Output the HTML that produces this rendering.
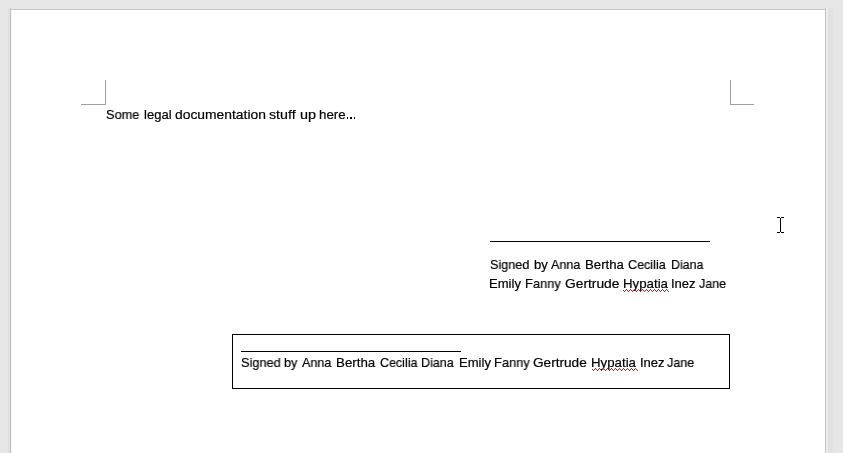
<!DOCTYPE html>
<html><head><meta charset="utf-8">
<style>
html,body{margin:0;padding:0;}
body{width:843px;height:453px;overflow:hidden;background:#e6e6e6;position:relative;font-family:"Liberation Sans",sans-serif;}
.abs{position:absolute;}
#page{position:absolute;left:10px;top:9px;width:815px;height:460px;background:#fff;}
.pb{position:absolute;}
.crop{position:absolute;background:#a0a0a0;}
.t{position:absolute;font-size:13px;line-height:15px;white-space:pre;color:#000;transform-origin:0 0;will-change:transform;-webkit-text-stroke:0.2px #000;}
.line{position:absolute;height:1px;background:#000;}
.box{position:absolute;border:1px solid #000;}
</style></head>
<body>
<div id="page"></div>
<div class="pb" style="left:8px;top:9px;width:2px;height:450px;background:#e0e0e0"></div>
<div class="pb" style="left:10px;top:8px;width:1px;height:450px;background:#c0c0c0"></div>
<div class="pb" style="left:11px;top:10px;width:1px;height:450px;background:#f6f6f6"></div>
<div class="pb" style="left:10px;top:9px;width:815px;height:1px;background:#c6c6c6"></div>
<div class="pb" style="left:12px;top:12px;width:813px;height:1px;background:#f8f8f8"></div>
<div class="pb" style="left:12px;top:14px;width:813px;height:1px;background:#f9f9f9"></div>
<div class="pb" style="left:825px;top:8px;width:1px;height:450px;background:#c2c2c2"></div>
<div class="pb" style="left:826px;top:8px;width:2px;height:450px;background:#eeeeee"></div>
<div class="pb" style="left:828px;top:8px;width:3px;height:450px;background:#e0e0e0"></div>
<div class="pb" style="left:831px;top:8px;width:2px;height:450px;background:#e3e3e3"></div>
<div class="crop" style="left:105px;top:80px;width:1px;height:25px;"></div>
<div class="crop" style="left:81px;top:104px;width:25px;height:1px;"></div>
<div class="crop" style="left:730px;top:80px;width:1px;height:25px;"></div>
<div class="crop" style="left:730px;top:104px;width:24px;height:1px;"></div>
<div class="line" style="left:490px;top:241px;width:220px;"></div>
<div class="box" style="left:232px;top:334px;width:496px;height:53px;"></div>
<div class="line" style="left:241px;top:351px;width:220px;"></div>
<div class="t" style="left:105.91px;top:107px;transform:scaleX(0.9798)">Some</div>
<div class="t" style="left:143.54px;top:107px;transform:scaleX(1.0020)">legal</div>
<div class="t" style="left:174.89px;top:107px;transform:scaleX(1.0662)">documentation</div>
<div class="t" style="left:269.04px;top:107px;transform:scaleX(1.0959)">stuff</div>
<div class="t" style="left:299.88px;top:107px;transform:scaleX(1.1084)">up</div>
<div class="t" style="left:318.94px;top:107px;transform:scaleX(1.0228)">here</div>
<div class="t" style="left:490.35px;top:257px;transform:scaleX(0.9722)">Signed</div>
<div class="t" style="left:533.62px;top:257px;transform:scaleX(1.0058)">by</div>
<div class="t" style="left:551.04px;top:257px;transform:scaleX(0.9607)">Anna</div>
<div class="t" style="left:584.82px;top:257px;transform:scaleX(1.0149)">Bertha</div>
<div class="t" style="left:628.31px;top:257px;transform:scaleX(0.9675)">Cecilia</div>
<div class="t" style="left:670.73px;top:257px;transform:scaleX(0.9545)">Diana</div>
<div class="t" style="left:489.47px;top:276px;transform:scaleX(1.0062)">Emily</div>
<div class="t" style="left:525.26px;top:276px;transform:scaleX(0.9856)">Fanny</div>
<div class="t" style="left:565.17px;top:276px;transform:scaleX(1.0604)">Gertrude</div>
<div class="t" style="left:622.64px;top:276px;transform:scaleX(1.0209)">Hypatia</div>
<div class="t" style="left:671.02px;top:276px;transform:scaleX(1.0012)">Inez</div>
<div class="t" style="left:698.52px;top:276px;transform:scaleX(0.9601)">Jane</div>
<div class="t" style="left:240.85px;top:355px;transform:scaleX(0.9823)">Signed</div>
<div class="t" style="left:284.36px;top:355px;transform:scaleX(0.9651)">by</div>
<div class="t" style="left:302.42px;top:355px;transform:scaleX(0.9607)">Anna</div>
<div class="t" style="left:336.17px;top:355px;transform:scaleX(1.0246)">Bertha</div>
<div class="t" style="left:379.69px;top:355px;transform:scaleX(0.9606)">Cecilia</div>
<div class="t" style="left:421.40px;top:355px;transform:scaleX(0.9623)">Diana</div>
<div class="t" style="left:458.79px;top:355px;transform:scaleX(1.0062)">Emily</div>
<div class="t" style="left:494.26px;top:355px;transform:scaleX(0.9856)">Fanny</div>
<div class="t" style="left:533.29px;top:355px;transform:scaleX(1.0481)">Gertrude</div>
<div class="t" style="left:591.20px;top:355px;transform:scaleX(1.0202)">Hypatia</div>
<div class="t" style="left:639.58px;top:355px;transform:scaleX(1.0012)">Inez</div>
<div class="t" style="left:667.40px;top:355px;transform:scaleX(0.9661)">Jane</div>
<div class="abs" style="left:346.6px;top:117px;width:1.9px;height:2px;background:#000"></div>
<div class="abs" style="left:350.3px;top:117px;width:1.9px;height:2px;background:#000"></div>
<div class="abs" style="left:353.5px;top:117px;width:1.9px;height:2px;background:#000"></div>
<svg class="abs" style="left:623px;top:289px" width="46" height="3" shape-rendering="crispEdges" fill="#c81e1e"><rect x="0" y="1" width="1" height="1"/><rect x="1" y="2" width="1" height="1"/><rect x="2" y="1" width="1" height="1"/><rect x="3" y="0" width="1" height="1"/><rect x="4" y="1" width="1" height="1"/><rect x="5" y="2" width="1" height="1"/><rect x="6" y="1" width="1" height="1"/><rect x="7" y="0" width="1" height="1"/><rect x="8" y="1" width="1" height="1"/><rect x="9" y="2" width="1" height="1"/><rect x="10" y="1" width="1" height="1"/><rect x="11" y="0" width="1" height="1"/><rect x="12" y="1" width="1" height="1"/><rect x="13" y="2" width="1" height="1"/><rect x="14" y="1" width="1" height="1"/><rect x="15" y="0" width="1" height="1"/><rect x="16" y="1" width="1" height="1"/><rect x="17" y="2" width="1" height="1"/><rect x="18" y="1" width="1" height="1"/><rect x="19" y="0" width="1" height="1"/><rect x="20" y="1" width="1" height="1"/><rect x="21" y="2" width="1" height="1"/><rect x="22" y="1" width="1" height="1"/><rect x="23" y="0" width="1" height="1"/><rect x="24" y="1" width="1" height="1"/><rect x="25" y="2" width="1" height="1"/><rect x="26" y="1" width="1" height="1"/><rect x="27" y="0" width="1" height="1"/><rect x="28" y="1" width="1" height="1"/><rect x="29" y="2" width="1" height="1"/><rect x="30" y="1" width="1" height="1"/><rect x="31" y="0" width="1" height="1"/><rect x="32" y="1" width="1" height="1"/><rect x="33" y="2" width="1" height="1"/><rect x="34" y="1" width="1" height="1"/><rect x="35" y="0" width="1" height="1"/><rect x="36" y="1" width="1" height="1"/><rect x="37" y="2" width="1" height="1"/><rect x="38" y="1" width="1" height="1"/><rect x="39" y="0" width="1" height="1"/><rect x="40" y="1" width="1" height="1"/><rect x="41" y="2" width="1" height="1"/><rect x="42" y="1" width="1" height="1"/><rect x="43" y="0" width="1" height="1"/><rect x="44" y="1" width="1" height="1"/><rect x="45" y="2" width="1" height="1"/></svg>
<svg class="abs" style="left:592px;top:368px" width="46" height="3" shape-rendering="crispEdges" fill="#c81e1e"><rect x="0" y="1" width="1" height="1"/><rect x="1" y="2" width="1" height="1"/><rect x="2" y="1" width="1" height="1"/><rect x="3" y="0" width="1" height="1"/><rect x="4" y="1" width="1" height="1"/><rect x="5" y="2" width="1" height="1"/><rect x="6" y="1" width="1" height="1"/><rect x="7" y="0" width="1" height="1"/><rect x="8" y="1" width="1" height="1"/><rect x="9" y="2" width="1" height="1"/><rect x="10" y="1" width="1" height="1"/><rect x="11" y="0" width="1" height="1"/><rect x="12" y="1" width="1" height="1"/><rect x="13" y="2" width="1" height="1"/><rect x="14" y="1" width="1" height="1"/><rect x="15" y="0" width="1" height="1"/><rect x="16" y="1" width="1" height="1"/><rect x="17" y="2" width="1" height="1"/><rect x="18" y="1" width="1" height="1"/><rect x="19" y="0" width="1" height="1"/><rect x="20" y="1" width="1" height="1"/><rect x="21" y="2" width="1" height="1"/><rect x="22" y="1" width="1" height="1"/><rect x="23" y="0" width="1" height="1"/><rect x="24" y="1" width="1" height="1"/><rect x="25" y="2" width="1" height="1"/><rect x="26" y="1" width="1" height="1"/><rect x="27" y="0" width="1" height="1"/><rect x="28" y="1" width="1" height="1"/><rect x="29" y="2" width="1" height="1"/><rect x="30" y="1" width="1" height="1"/><rect x="31" y="0" width="1" height="1"/><rect x="32" y="1" width="1" height="1"/><rect x="33" y="2" width="1" height="1"/><rect x="34" y="1" width="1" height="1"/><rect x="35" y="0" width="1" height="1"/><rect x="36" y="1" width="1" height="1"/><rect x="37" y="2" width="1" height="1"/><rect x="38" y="1" width="1" height="1"/><rect x="39" y="0" width="1" height="1"/><rect x="40" y="1" width="1" height="1"/><rect x="41" y="2" width="1" height="1"/><rect x="42" y="1" width="1" height="1"/><rect x="43" y="0" width="1" height="1"/><rect x="44" y="1" width="1" height="1"/><rect x="45" y="2" width="1" height="1"/></svg>
<div class="abs" style="left:777px;top:217px;width:3px;height:1px;background:#000;"></div>
<div class="abs" style="left:781px;top:217px;width:3px;height:1px;background:#000;"></div>
<div class="abs" style="left:780px;top:218px;width:1px;height:14px;background:#000;"></div>
<div class="abs" style="left:777px;top:232px;width:3px;height:1px;background:#000;"></div>
<div class="abs" style="left:781px;top:232px;width:3px;height:1px;background:#000;"></div>
</body></html>
